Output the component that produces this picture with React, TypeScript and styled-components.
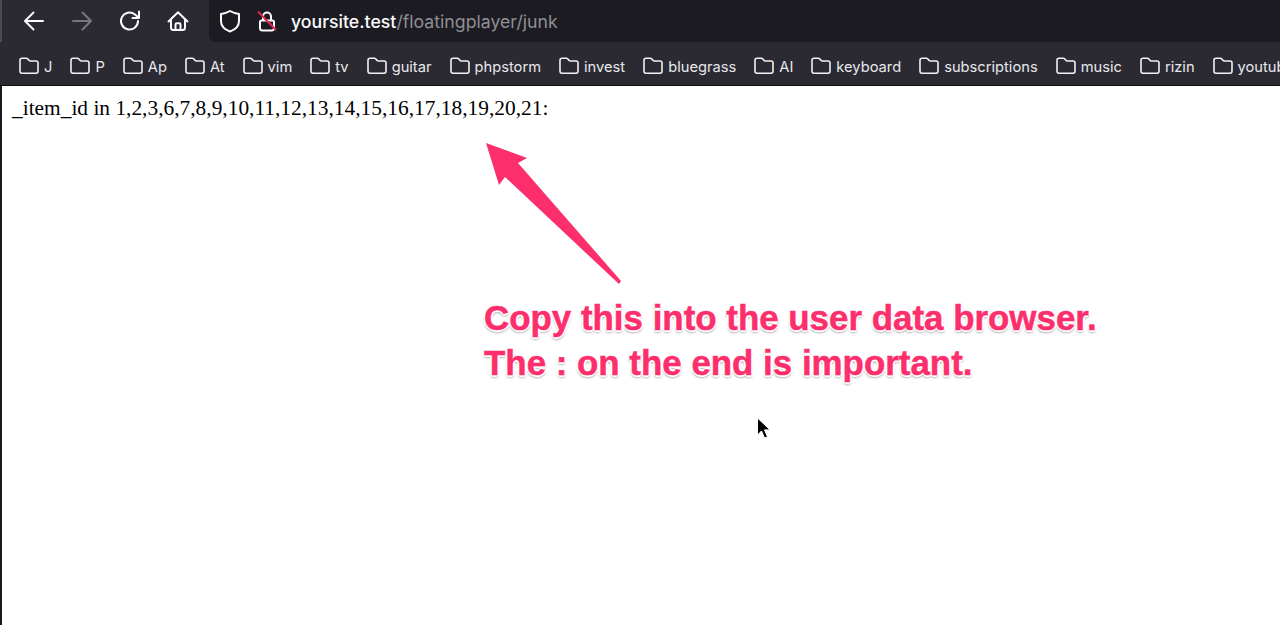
import styled, { createGlobalStyle } from 'styled-components'

const bookmarks = ['J', 'P', 'Ap', 'At', 'vim', 'tv', 'guitar', 'phpstorm', 'invest', 'bluegrass', 'AI', 'keyboard', 'subscriptions', 'music', 'rizin', 'youtube']

function FolderIcon() {
  return (
    <FolderSvg viewBox="0 0 20 18">
      <path d="M3 1.2h4.2c.8 0 1.2.3 1.7.9l1 1.2c.4.5.8.7 1.500.7H17c1.200 0 2 .8 2 2v8c0 1.300-.8 2.200-2 2.200H3c-1.200 0-2-.9-2-2.200V3.200c0-1.200.8-2 2-2z" />
    </FolderSvg>
  )
}

function App() {
  return (
    <Page>
      <GlobalStyle />
      <Toolbar>
        <NavButtons>
          <NavIcon viewBox="0 0 24 24">
            <path d="M21 12H3.500M11.500 3.500 3 12l8.500 8.500" />
          </NavIcon>
          <NavIcon viewBox="0 0 24 24" $muted>
            <path d="M3 12h17.500M12.500 3.500 21 12l-8.500 8.500" />
          </NavIcon>
          <NavIcon viewBox="0 0 24 24">
            <path d="M20 12a8.500 8.500 0 1 1-3-6.500L20.500 8.500M21 2.500v6.500h-6.500" />
          </NavIcon>
          <NavIcon viewBox="0 0 24 24">
            <path d="M2.500 12.500 12 3.200l9.500 9.300M5 10.500v8c0 1.500 1 2.500 2.500 2.500h9c1.500 0 2.500-1 2.500-2.500v-8M9.500 21v-5.500c0-.8.5-1.300 1.300-1.300h2.400c.8 0 1.300.5 1.300 1.300V21" />
          </NavIcon>
        </NavButtons>
        <UrlBar>
          <ShieldIcon viewBox="0 0 22 24">
            <path d="M11 2c2.800 1.700 5.500 2.600 9 3v7c0 5-3.500 8.500-9 10.500C5.500 20.500 2 17 2 12V5c3.500-.4 6.200-1.300 9-3z" />
          </ShieldIcon>
          <LockIcon viewBox="0 0 20 22">
            <path className="body" d="M4.500 10.500h11c1 0 1.500.5 1.500 1.500v6c0 1.500-1 2.500-2.500 2.500h-9C4 20.500 3 19.500 3 18v-6c0-1 .5-1.500 1.500-1.500z" />
            <path className="body" d="M6 10V6.500a4 4 0 0 1 8 0V10" />
            <path className="slash" d="M1 1.500 19 20" />
          </LockIcon>
          <UrlText>
            yoursite.test<UrlPath>/floatingplayer/junk</UrlPath>
          </UrlText>
        </UrlBar>
      </Toolbar>
      <BookmarksBar>
        {bookmarks.map((name) => (
          <Bookmark key={name}>
            <FolderIcon />
            {name}
          </Bookmark>
        ))}
      </BookmarksBar>
      <Content>
        <QueryLine>_item_id in 1,2,3,6,7,8,9,10,11,12,13,14,15,16,17,18,19,20,21:</QueryLine>
        <ArrowMark viewBox="0 0 140 145">
          <path d="M1 2 42 17 33 22 136 140 134 143 20 36 14 44z" />
        </ArrowMark>
        <Note>
          Copy this into the user data browser.
          <br />
          The : on the end is important.
        </Note>
        <Pointer viewBox="0 0 16 24">
          <path d="M1.500 1v17l4-4 3 7 3-1.300-3-6.800h5.500z" />
        </Pointer>
      </Content>
    </Page>
  )
}

export default App

const GlobalStyle = createGlobalStyle`
    html, body {
        margin: 0;
        padding: 0;
        height: 100%;
        background: #ffffff;
        overflow: hidden;
    }
`

const Page = styled.div`
    width: 1280px;
    height: 625px;
    display: flex;
    flex-direction: column;
    overflow: hidden;
    font-family: "Inter", "Liberation Sans", sans-serif;
`

const Toolbar = styled.div`
    height: 42px;
    display: flex;
    background: #2b2a33;
    border-left: 2px solid #4a4a50;
    flex-shrink: 0;
`

const NavButtons = styled.div`
    width: 207px;
    display: flex;
    align-items: center;
    gap: 24px;
    padding: 0 0 0 20px;
    box-sizing: border-box;
`

const NavIcon = styled.svg<{ $muted?: boolean }>`
    width: 24px;
    height: 24px;
    fill: none;
    stroke: ${(p) => (p.$muted ? '#77767c' : '#fbfbfe')};
    stroke-width: 2;
    stroke-linecap: round;
    stroke-linejoin: round;
`

const UrlBar = styled.div`
    flex: 1;
    display: flex;
    align-items: center;
    background: #1c1b22;
    border-bottom-left-radius: 6px;
    padding-left: 10px;
`

const ShieldIcon = styled.svg`
    width: 22px;
    height: 24px;
    fill: none;
    stroke: #fbfbfe;
    stroke-width: 2;
    stroke-linejoin: round;
`

const LockIcon = styled.svg`
    width: 20px;
    height: 22px;
    margin-left: 16px;
    fill: none;
    stroke-width: 2;

    .body {
        stroke: #fbfbfe;
    }

    .slash {
        stroke: #e22850;
    }
`

const UrlText = styled.div`
    margin-left: 14px;
    padding-top: 1px;
    font-size: 17.7px;
    font-weight: 500;
    color: #fbfbfe;
`

const UrlPath = styled.span`
    font-weight: 400;
    color: #8f8f94;
`

const BookmarksBar = styled.div`
    height: 44px;
    display: flex;
    align-items: center;
    gap: 18px;
    padding: 7px 0 0 19px;
    box-sizing: border-box;
    background: #2b2a33;
    border-bottom: 1px solid #0c0c0d;
    flex-shrink: 0;
    overflow: hidden;
`

const Bookmark = styled.div`
    display: flex;
    align-items: center;
    gap: 5px;
    font-size: 14.7px;
    color: #e8e8ec;
    white-space: nowrap;
    flex-shrink: 0;
`

const FolderSvg = styled.svg`
    width: 20px;
    height: 18px;
    margin-top: -3px;
    fill: none;
    stroke: #f0f0f3;
    stroke-width: 1.600;
    flex-shrink: 0;
`

const Content = styled.div`
    position: relative;
    flex: 1;
    background: #ffffff;
    border-left: 2px solid #1c1b22;
`

const QueryLine = styled.div`
    padding: 10px 0 0 10px;
    font-family: "Liberation Serif", serif;
    font-size: 21.4px;
    line-height: 24px;
    color: #000000;
`

const ArrowMark = styled.svg`
    position: absolute;
    left: 483px;
    top: 55px;
    width: 140px;
    height: 145px;
    fill: #fc2e6c;
`

const Note = styled.div`
    position: absolute;
    left: 482px;
    top: 209px;
    font-family: "Liberation Sans", sans-serif;
    font-size: 34.9px;
    line-height: 45px;
    font-weight: 700;
    white-space: nowrap;
    color: #fc2e6c;
    -webkit-text-stroke: 0.5px #fc2e6c;
    text-shadow: 1px 1px 0 #fff, -1px 1px 0 #fff, 1px -1px 0 #fff, -1px -1px 0 #fff, 0 2px 0 #fff, 2px 0 0 #fff, -2px 0 0 #fff, 0 -2px 0 #fff, 0 2px 3px rgba(0, 0, 0, 0.6);
`

const Pointer = styled.svg`
    position: absolute;
    left: 754px;
    top: 331px;
    width: 16px;
    height: 24px;
    fill: #000000;
    stroke: #ffffff;
    stroke-width: 1;
`
